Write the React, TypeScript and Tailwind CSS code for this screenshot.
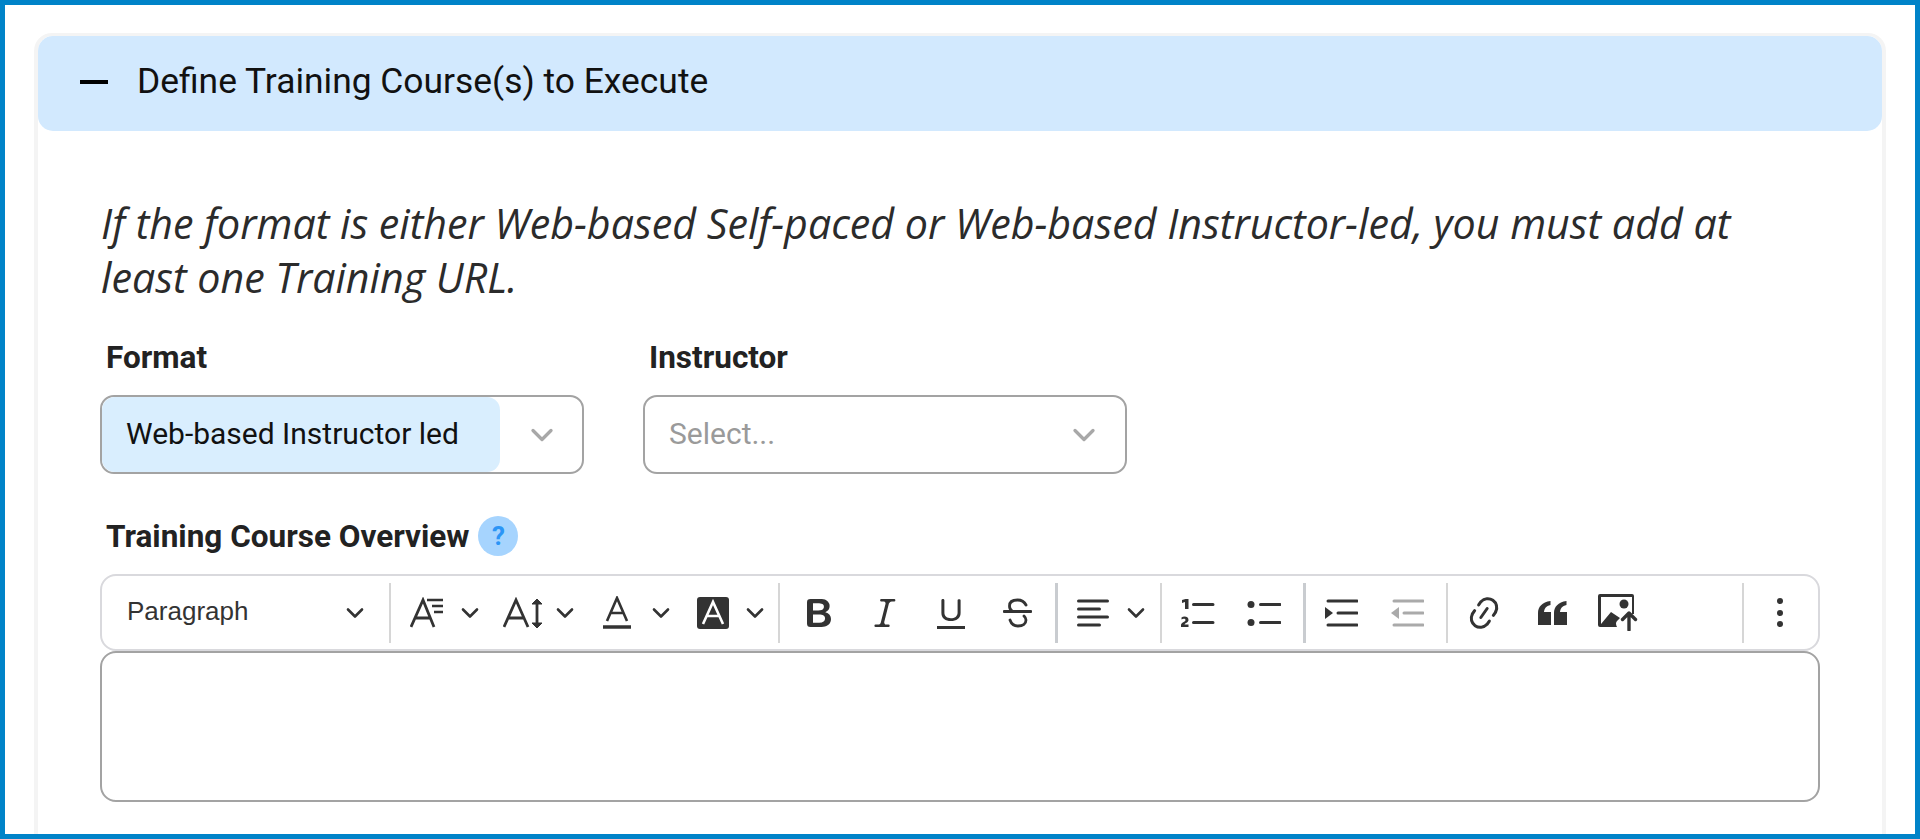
import { ChevronDown } from 'lucide-react';

const Chev = ({ className }: { className: string }) => (
  <svg viewBox="0 0 20 20" className={`h-[20px] w-[20px] shrink-0 ${className}`} fill="none" stroke="#333" strokeWidth="2.6" strokeLinecap="round" strokeLinejoin="round">
    <path d="M3 6.5 10 13.5 17 6.5" />
  </svg>
);

const Sep = ({ className }: { className: string }) => <div className={`h-[60px] shrink-0 ${className}`} />;

const Toolbar = () => (
  <div className="flex h-[77px] items-center rounded-[16px] border-2 border-[#d9d9dd] bg-white">
    <span className="ml-[25px] w-[217px] shrink-0 pb-[3px] font-['Liberation_Sans',sans-serif] text-[26px] leading-none text-[#333]">Paragraph</span>
    <Chev className="ml-[1px]" />
    <Sep className="ml-[24px] w-[2px] bg-[#d6d6d6]" />

    {/* font family */}
    <svg viewBox="0 0 34 32" className="ml-[19px] h-[32px] w-[34px] shrink-0" fill="none" stroke="#333" strokeWidth="2.8">
      <path d="M1 30 13 3 24 30M5 21H20" />
      <path d="M17 3H33M22 9H33M24 15H33" strokeWidth="2.4" />
    </svg>
    <Chev className="ml-[16px]" />
    {/* font size */}
    <svg viewBox="0 0 40 32" className="ml-[23px] h-[32px] w-[40px] shrink-0" fill="none" stroke="#333" strokeWidth="2.8">
      <path d="M1 30 13 3 25 30M5.500 21H20.500" />
      <path d="M34 4V29" strokeWidth="2.8" />
      <path d="M29 7 34 2 39 7ZM29 26 34 31 39 26Z" fill="#333" strokeWidth="1" />
    </svg>
    <Chev className="ml-[12px]" />
    {/* font colour */}
    <svg viewBox="0 0 28 34" className="ml-[28px] h-[34px] w-[28px] shrink-0" fill="none" stroke="#333" strokeWidth="2.600">
      <path d="M4 25 14 2 24 25M7.500 17H20.500" />
      <path d="M0 31H28" strokeWidth="3.600" strokeLinecap="round" />
    </svg>
    <Chev className="ml-[20px]" />
    {/* background colour */}
    <svg viewBox="0 0 32 32" className="ml-[26px] h-[32px] w-[32px] shrink-0">
      <rect width="32" height="32" rx="3" fill="#333" />
      <path d="M6 27 16 5 26 27M9.500 19H22.500" fill="none" stroke="#fff" strokeWidth="2.600" />
    </svg>
    <Chev className="ml-[16px]" />
    <Sep className="ml-[13px] w-[2px] bg-[#d6d6d6]" />

    {/* bold */}
    <svg viewBox="0 0 20 20" className="ml-[19px] h-[40px] w-[40px] shrink-0" fill="#333">
      <path d="M10.187 17H5.773c-.637 0-1.092-.138-1.364-.415-.273-.277-.409-.718-.409-1.323V4.738c0-.617.14-1.062.419-1.332.279-.27.73-.406 1.354-.406h4.68c.69 0 1.288.041 1.793.124.506.083.96.242 1.36.478.341.197.644.447.906.75a3.262 3.262 0 0 1 .808 2.162c0 1.401-.722 2.426-2.167 3.075C15.05 10.175 16 11.315 16 13.01a3.756 3.756 0 0 1-2.296 3.504 6.1 6.1 0 0 1-1.517.377c-.571.073-1.238.11-2 .11zm-.217-6.217H7v4.087h3.069c1.977 0 2.965-.69 2.965-2.072 0-.707-.256-1.22-.768-1.537-.512-.319-1.277-.478-2.296-.478zM7 5.13v3.619h2.606c.729 0 1.292-.067 1.69-.2a1.6 1.6 0 0 0 .91-.765c.165-.267.247-.566.247-.897 0-.707-.26-1.176-.778-1.409-.519-.232-1.31-.348-2.375-.348H7z" />
    </svg>
    {/* italic */}
    <svg viewBox="0 0 20 20" className="ml-[26px] h-[40px] w-[40px] shrink-0" fill="#333">
      <path d="m9.586 14.633.021.004c-.036.335.095.655.393.962.082.083.173.15.274.201h1.474a.6.6 0 1 1 0 1.2H5.304a.6.6 0 0 1 0-1.2h1.15c.474-.07.809-.182 1.005-.334.157-.122.291-.32.404-.597l2.416-9.55a1.053 1.053 0 0 0-.281-.823 1.12 1.12 0 0 0-.442-.296H8.15a.6.6 0 0 1 0-1.2h6.443a.6.6 0 1 1 0 1.2h-1.195c-.376.056-.65.155-.823.296-.215.175-.423.439-.623.79l-2.366 9.347z" />
    </svg>
    {/* underline */}
    <svg viewBox="0 0 20 20" className="ml-[26px] h-[40px] w-[40px] shrink-0" fill="#333">
      <path d="M3 18v-1.5h14V18zm2.2-8V3.6c0-.4.4-.6.8-.6.3 0 .7.2.7.6v6.2c0 2 1.3 2.8 3.2 2.8 1.9 0 3.4-.9 3.4-2.9V3.6c0-.3.4-.5.8-.5.3 0 .7.2.7.5V10c0 2.7-2.2 4-4.9 4-2.6 0-4.7-1.2-4.7-4z" />
    </svg>
    {/* strikethrough */}
    <svg viewBox="0 0 29 30" className="ml-[32px] h-[30px] w-[29px] shrink-0" fill="none" stroke="#333" strokeWidth="2.800" strokeLinecap="round">
      <path d="M1 13.500H28" />
      <path d="M23 7C21 3 18 2 14.500 2 9 2 6.500 4.500 6.500 8 6.500 10 7.500 12 9 13M7 22C8.500 26.500 11.500 28 15 28 20 28 23 25.500 23 22 23 20 22 19 21 18" />
    </svg>
    <Sep className="ml-[23px] w-[3px] bg-[#c9ccd0]" />

    {/* alignment */}
    <svg viewBox="0 0 32 30" className="ml-[19px] h-[30px] w-[32px] shrink-0" stroke="#333" strokeWidth="3" strokeLinecap="round">
      <path d="M1.500 3H30.500M1.500 11H22.500M1.500 19H30.500M1.500 27H22.500" />
    </svg>
    <Chev className="ml-[17px]" />
    <Sep className="ml-[14px] w-[2px] bg-[#d6d6d6]" />

    {/* numbered list */}
    <svg viewBox="0 0 35 30" className="ml-[18px] h-[30px] w-[35px] shrink-0">
      <path d="M13.500 6.500H33M13.500 24.500H33" stroke="#333" strokeWidth="3" strokeLinecap="round" />
      <path d="M2 2 5.500 1H8.500V11H5V4L2 5Z" fill="#333" />
      <path d="M1 29V27C1 24.500 5.500 24 5.500 22 5.500 20.500 3 20.500 1.500 21.500V19.500C3.500 18 8.500 18 8.500 22 8.500 24.500 5 25 4.500 26.500H8.500V29Z" fill="#333" />
    </svg>
    {/* bulleted list */}
    <svg viewBox="0 0 34 30" className="ml-[32px] h-[30px] w-[34px] shrink-0">
      <path d="M13.500 6.500H33M13.500 24.500H33" stroke="#333" strokeWidth="3" strokeLinecap="round" />
      <circle cx="4" cy="6.500" r="3.500" fill="#333" />
      <circle cx="4" cy="24.500" r="3.500" fill="#333" />
    </svg>
    <Sep className="ml-[22px] w-[3px] bg-[#c9ccd0]" />

    {/* indent */}
    <svg viewBox="0 0 33 30" className="ml-[19px] h-[30px] w-[33px] shrink-0">
      <path d="M3 3H32M13 15H32M3 27H32" stroke="#333" strokeWidth="3" strokeLinecap="round" />
      <path d="M0 9 8 15 0 21Z" fill="#333" />
    </svg>
    {/* outdent */}
    <svg viewBox="0 0 33 30" className="ml-[33px] h-[30px] w-[33px] shrink-0">
      <path d="M3 3H32M13 15H32M3 27H32" stroke="#aaa" strokeWidth="3" strokeLinecap="round" />
      <path d="M8 9 0 15 8 21Z" fill="#aaa" />
    </svg>
    <Sep className="ml-[22px] w-[2px] bg-[#d6d6d6]" />

    {/* link */}
    <svg viewBox="0 0 20 20" className="ml-[16px] h-[40px] w-[40px] shrink-0" fill="#333">
      <path d="m11.077 15 .991-1.416a.75.75 0 1 1 1.229.86l-1.148 1.64a.748.748 0 0 1-.217.206 5.251 5.251 0 0 1-8.503-5.955.741.741 0 0 1 .12-.274l1.147-1.639a.75.75 0 1 1 1.228.86L4.933 10.7l.006.003a3.75 3.75 0 0 0 6.132 4.294l.006.004zm5.494-5.335a.748.748 0 0 1-.12.274l-1.147 1.639a.75.75 0 1 1-1.228-.86l.86-1.23a3.75 3.75 0 0 0-6.144-4.301l-.86 1.229a.75.75 0 0 1-1.229-.86l1.148-1.64a.748.748 0 0 1 .217-.206 5.251 5.251 0 0 1 8.503 5.955zm-4.563-2.532a.75.75 0 0 1 .184 1.045l-3.155 4.505a.75.75 0 1 1-1.229-.86l3.155-4.506a.75.75 0 0 1 1.045-.184z" />
    </svg>
    {/* block quote */}
    <svg viewBox="0 0 29 24" className="ml-[34px] h-[24px] w-[29px] shrink-0" fill="#333">
      <path d="M0 24V12C0 6 4 1 12.500 0V4C8 5 6.500 7.500 6 11H13V24ZM16 24V12C16 6 20 1 28.500 0V4C24 5 22.500 7.500 22 11H29V24Z" />
    </svg>
    {/* insert image */}
    <svg viewBox="0 0 40 37" className="ml-[31px] h-[37px] w-[40px] shrink-0">
      <path d="M2 0H34Q36 0 36 2V20H34V3H3V30L13 18 22 24 19 27Q17 29 19 33H2Q0 33 0 31V2Q0 0 2 0Z" fill="#333" />
      <circle cx="26" cy="10" r="4.500" fill="#333" />
      <path d="M31 36V19M24.500 25.500 31 19 37.500 25.500" fill="none" stroke="#333" strokeWidth="3.400" strokeLinecap="round" strokeLinejoin="round" />
    </svg>
    <Sep className="ml-[104px] w-[2px] bg-[#d6d6d6]" />

    {/* more */}
    <div className="ml-[33px] flex w-[6px] shrink-0 flex-col gap-[5.500px]">
      <div className="h-[6px] w-[6px] rounded-full bg-[#333]" />
      <div className="h-[6px] w-[6px] rounded-full bg-[#333]" />
      <div className="h-[6px] w-[6px] rounded-full bg-[#333]" />
    </div>
  </div>
);

const App = () => {
  return (
    <div className="h-[839px] overflow-hidden border-[5px] border-[#0083c8] bg-white pl-[29px] pr-[29px] pt-[28px]">
      <div className="h-[900px] rounded-[18px] border-x-[4px] border-t-[3px] border-[#f4f4f4] bg-white">
        {/* Accordion header */}
        <div className="flex h-[95px] items-center rounded-[15px] bg-[#d2e9fe]">
          <div className="mb-[3px] ml-[42px] h-[4px] w-[28px] bg-black" />
          <span className="ml-[29px] pb-[3px] font-['Roboto',sans-serif] text-[35.400px] leading-none text-[#111]">Define Training Course(s) to Execute</span>
        </div>

        <div className="px-[62px]">
          <p className="ml-px mt-[65px] whitespace-nowrap font-['Open_Sans',sans-serif] text-[41.200px] italic leading-[54px] text-[#2b2b2b]">
            If the format is either Web-based Self-paced or Web-based Instructor-led, you must add at
            <br />
            least one Training URL.
          </p>

          <div className="mt-[36px] flex gap-[59px]">
            <div className="w-[484px]">
              <div className="pl-[6px] font-['Roboto',sans-serif] text-[31.500px] font-bold leading-[36px] text-[#222]">Format</div>
              <div className="mt-[19px] flex h-[79px] rounded-[14px] border-2 border-[#a3a3a3] bg-white">
                <div className="flex w-[398px] items-center rounded-[13px] bg-[#d9eefe] pb-[3px] pl-[24px] font-['Roboto',sans-serif] text-[30px] text-[#111]">Web-based Instructor led</div>
                <div className="flex flex-1 items-center justify-center pl-[2px]">
                  <ChevronDown size={36} strokeWidth={2.2} color="#a8a8a8" />
                </div>
              </div>
            </div>
            <div className="w-[484px]">
              <div className="pl-[6px] font-['Roboto',sans-serif] text-[31.500px] font-bold leading-[36px] text-[#222]">Instructor</div>
              <div className="mt-[19px] flex h-[79px] items-center justify-between rounded-[14px] border-2 border-[#a3a3a3] bg-white pl-[24px] pr-[23px]">
                <span className="pb-[3px] font-['Roboto',sans-serif] text-[30px] text-[#9a9a9a]">Select...</span>
                <ChevronDown size={36} strokeWidth={2.2} color="#a8a8a8" />
              </div>
            </div>
          </div>

          <div className="mt-[42px] flex h-[40px] items-center pl-[6px]">
            <span className="pt-[2px] font-['Roboto',sans-serif] text-[31.500px] font-bold text-[#222]">Training Course Overview</span>
            <span className="ml-[9px] flex h-[40px] w-[40px] items-center justify-center rounded-full bg-[#a6d4fe] font-['Roboto',sans-serif] text-[26px] font-bold text-[#2b95f6]">?</span>
          </div>

          <div className="mt-[18px]">
            <Toolbar />
          </div>
          <div className="h-[151px] rounded-[16px] border-2 border-[#a3a3a3] bg-white" />
        </div>
      </div>
    </div>
  );
};

export default App;
